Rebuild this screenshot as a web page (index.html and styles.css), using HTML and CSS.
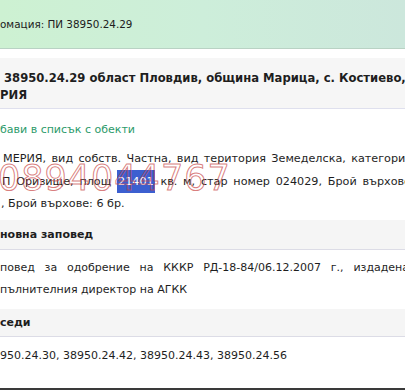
FILE: index.html
```html
<!DOCTYPE html>
<html lang="bg">
<head>
<meta charset="utf-8">
<link rel="stylesheet" href="styles.css">
</head>
<body>
<div class="page">
  <div class="header"><span class="header-text">омация: ПИ 38950.24.29</span></div>
  <div class="title">
    <div class="line l-first">38950.24.29 област Пловдив, община Марица, с. Костиево,</div>
    <div class="line">РИЯ</div>
  </div>
  <div class="link">бави в списък с обекти</div>
  <div class="para">
    <div class="jl l1">МЕРИЯ, вид собств. Частна, вид територия Земеделска, категория</div>
    <div class="jl l2">П Оризище, площ <span class="sel">21401</span> кв. м, стар номер 024029, Брой върхове</div>
    <div class="ll l3">, Брой върхове: 6 бр.</div>
    <div class="watermark">0894044767</div>
  </div>
  <div class="band band1">новна заповед</div>
  <div class="para2">
    <div class="jl p2l1">повед за одобрение на КККР РД-18-84/06.12.2007 г., издадена от</div>
    <div class="ll">пълнителния директор на АГКК</div>
  </div>
  <div class="band band2">седи</div>
  <div class="nums">950.24.30, 38950.24.42, 38950.24.43, 38950.24.56</div>
  <div class="bottom"></div>
</div>
</body>
</html>
```
FILE: styles.css
```css
html, body {
  margin: 0;
  padding: 0;
  background: #ffffff;
  overflow: hidden;
}
body {
  width: 405px;
  height: 390px;
  font-family: "DejaVu Sans", Tahoma, sans-serif;
  font-size: 11px;
  color: #1e1e1e;
}
.page {
  position: relative;
  width: 405px;
  height: 390px;
  overflow: hidden;
  display: flex;
  flex-direction: column;
}
.header {
  height: 49px;
  flex: none;
  background: linear-gradient(90deg, #cdf1d2 0%, #cdeeda 50%, #cce7dc 100%);
  border-bottom: 1px solid #b9d2c4;
  box-sizing: border-box;
  padding-top: 17px;
  line-height: 15px;
  font-size: 10.4px;
  color: #202020;
}
.title {
  margin-top: 9px;
  background: #f6f6f6;
  padding: 12px 0 4px 0;
  border-bottom: 1px solid #dfe0ee;
  font-weight: bold;
  font-size: 11.6px;
  line-height: 17px;
  white-space: nowrap;
}
.l-first { padding-left: 4px; }
.link {
  margin-top: 12px;
  color: #2c9a6a;
  line-height: 18px;
  font-size: 11px;
}
.para {
  position: relative;
  margin-top: 9px;
  width: 440px;
  line-height: 22.5px;
  font-size: 11.2px;
}
.jl {
  text-align: justify;
  text-align-last: justify;
}
.l1 { padding-left: 3px; width: 409px; }
.l2 { padding-left: 2px; width: 409px; }
.l3 { padding-left: 1px; }
.sel {
  background: #3c5fd0;
  color: #fff;
  padding: 5px 1px;
}
.watermark {
  position: absolute;
  left: -2px;
  top: 12px;
  font-size: 35px;
  line-height: 36px;
  letter-spacing: 1px;
  color: transparent;
  -webkit-text-stroke: 1px rgba(200, 70, 70, 0.7);
  pointer-events: none;
}
.band {
  background: #f5f5f5;
  border-bottom: 1px solid #dcdce6;
  font-weight: bold;
  font-size: 11px;
  line-height: 29px;
}
.band1 { margin-top: 4px; padding-top: 1px; line-height: 28px; }
.para2 {
  width: 440px;
  line-height: 22px;
  margin-top: 7px;
}
.p2l1 { width: 432px; }
.band2 { margin-top: 8px; line-height: 27px; }
.nums {
  margin-top: 8px;
  line-height: 22px;
}
.bottom {
  margin-top: auto;
  height: 2px;
  background: #3a3a3a;
}
```
